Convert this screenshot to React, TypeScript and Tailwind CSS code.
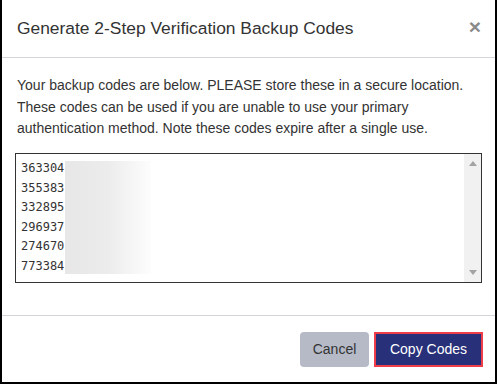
const codes = ['363304', '355383', '332895', '296937', '274670', '773384'];

export default function App() {
  return (
    <div
      className="w-[497px] h-[384px] bg-white border-l-2 border-r-2 border-b-2 border-black flex flex-col text-[#333]"
      style={{ fontFamily: '"Liberation Sans", Arial, sans-serif' }}
    >
      <div className="h-[58px] shrink-0 flex items-center justify-between pl-[15px] pr-[14px] border-b border-[#d4d4dc]">
        <h1 className="text-[17.4px] leading-none">Generate 2-Step Verification Backup Codes</h1>
        <button className="text-[21px] font-bold leading-none text-[#8a8a8a] -mt-[4px]">×</button>
      </div>

      <div className="px-[13px] pt-[17px] pb-[32px]">
        <p className="text-[14px] leading-[21.7px] pl-[2px]">
          Your backup codes are below. PLEASE store these in a secure location. These codes can be used if you are
          unable to use your primary authentication method. Note these codes expire after a single use.
        </p>

        <div className="relative mt-[13px] h-[130px] border border-[#333] flex">
          <div
            className="flex-1 pl-[5px] pt-[5px] text-[12px] leading-[19.6px] text-[#333]"
            style={{ fontFamily: '"DejaVu Sans Mono", "Liberation Mono", monospace' }}
          >
            {codes.map((c) => (
              <div key={c}>{c}</div>
            ))}
          </div>
          <div className="absolute left-[49px] top-[7px] w-[86px] h-[113px] bg-gradient-to-r from-[#e7e7e7] via-[#ececec] to-[#fdfdfd]" />
          <div className="w-[17px] bg-[#f1f1f1] flex flex-col items-center justify-between py-[7px]">
            <svg width="8" height="5" viewBox="0 0 8 5">
              <path d="M0 5 L4 0 L8 5 Z" fill="#a3a3a3" />
            </svg>
            <svg width="8" height="5" viewBox="0 0 8 5">
              <path d="M0 0 L8 0 L4 5 Z" fill="#a3a3a3" />
            </svg>
          </div>
        </div>
      </div>

      <div className="flex-1 border-t border-[#d4d4dc] flex items-start justify-end gap-[5px] pt-[16px] pr-[12px]">
        <button className="w-[69px] h-[35px] rounded-[4px] bg-[#b6bac7] text-[14px] text-[#333]">Cancel</button>
        <button className="w-[109px] h-[35px] border-2 border-[#ef3e4a] bg-[#283079] text-[14px] text-white">
          Copy Codes
        </button>
      </div>
    </div>
  );
}
